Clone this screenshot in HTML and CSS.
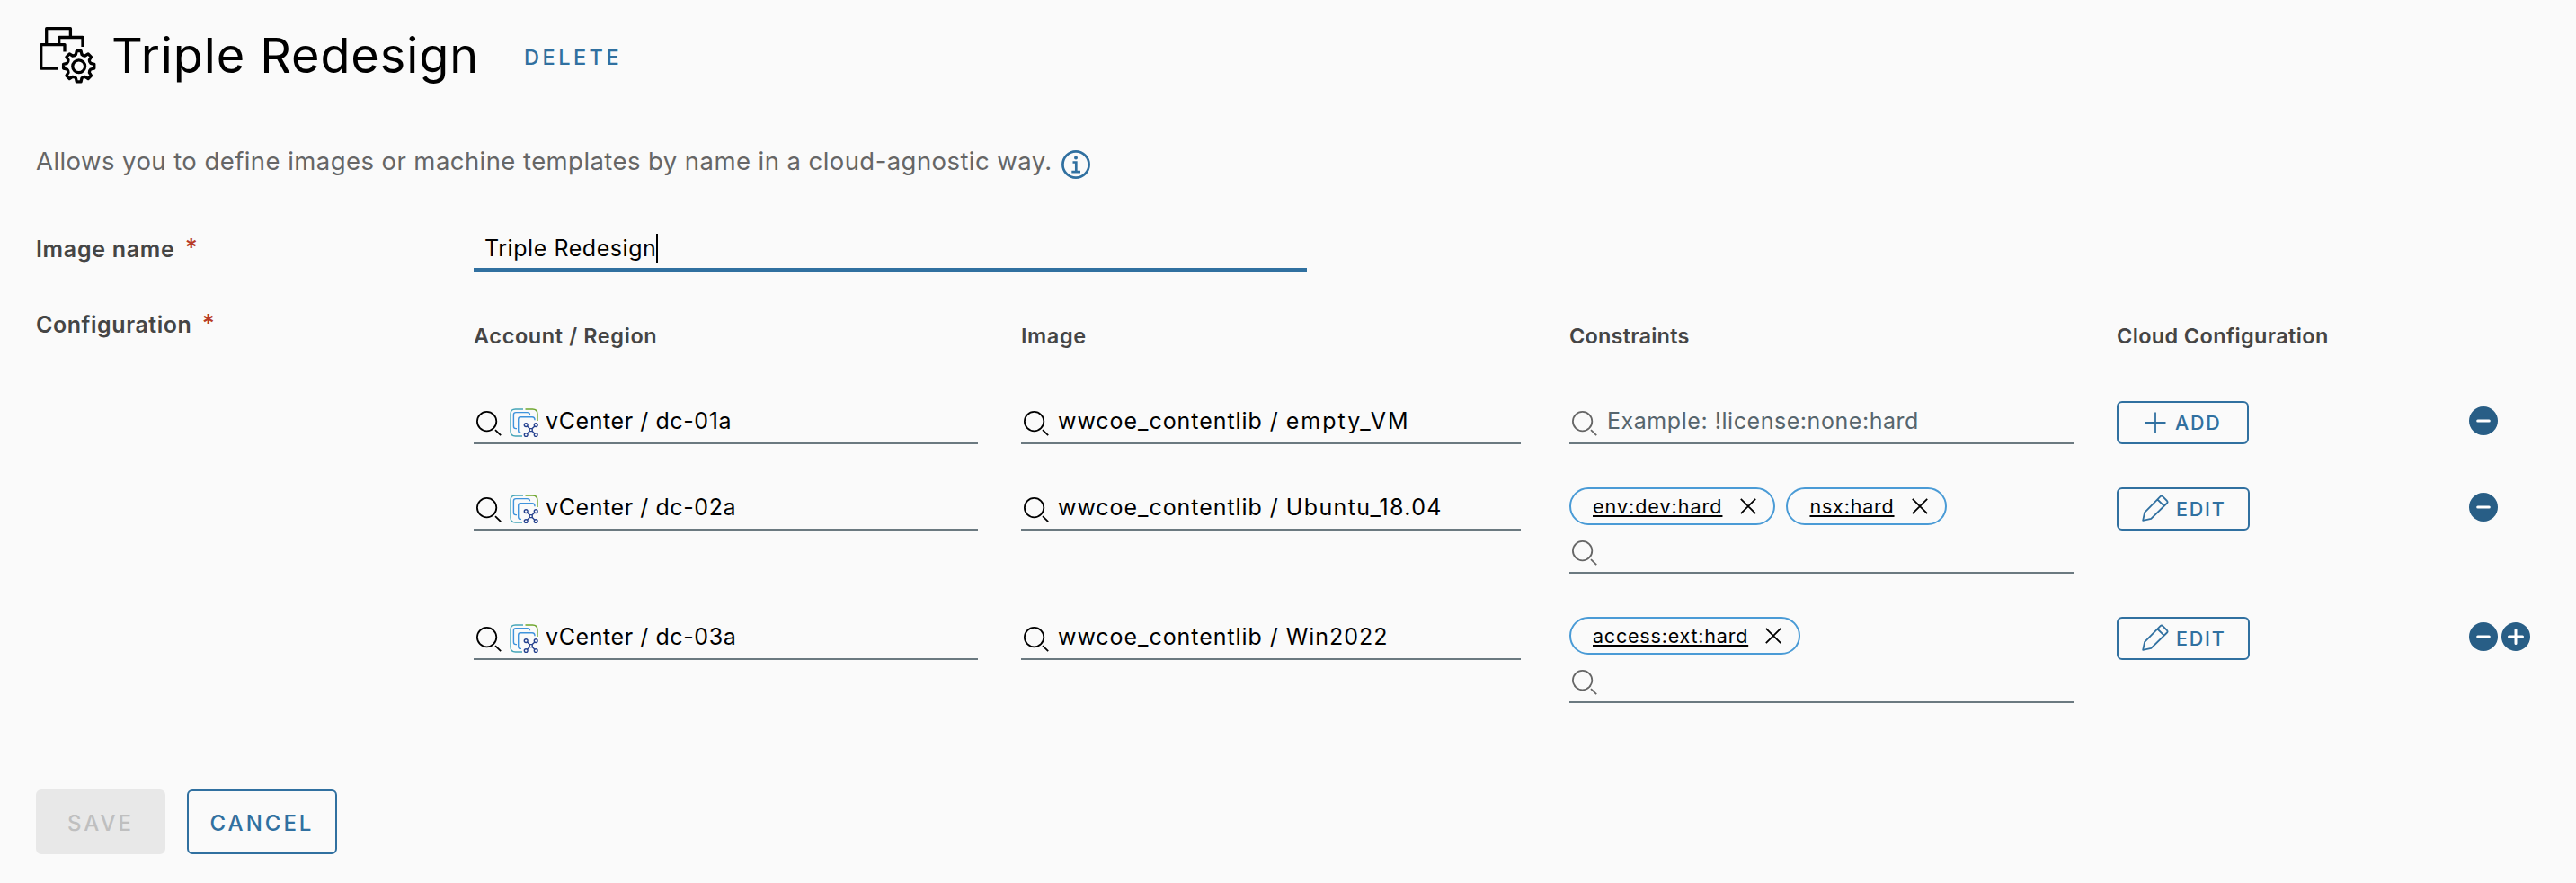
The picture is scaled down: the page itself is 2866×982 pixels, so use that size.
FILE: index.html
```html
<!DOCTYPE html>
<html lang="en">
<head>
<meta charset="utf-8">
<title>Triple Redesign</title>
<link rel="stylesheet" href="styles.css">
</head>
<body>
<svg class="defs" aria-hidden="true">
  <symbol id="search" viewBox="0 0 28 28">
    <circle cx="11.6" cy="11.6" r="10.7"/><path d="M21 21.2 27.2 27.2"/>
  </symbol>
  <symbol id="vcenter" viewBox="0 0 32 32">
    <path stroke="#45a5b8" d="M15 1H6.5Q1 1 1 6.5v19Q1 31 6.5 31H14"/>
    <path stroke="#6fa62e" d="M17.5 1h8Q31 1 31 6.5V14"/>
    <path stroke="#3f93dc" d="M8 22.6H7Q4.4 22.6 4.4 20V7Q4.4 4.6 7 4.6h12.5q3 0 3 2.7"/>
    <path stroke="#3f93dc" d="M13 27.4h-1Q9.7 27.4 9.7 25V12.3q0-2.5 2.5-2.5H25q3 0 3 3.4"/>
    <g stroke="#26428f"><circle cx="18.2" cy="18.6" r="1.9"/><circle cx="29.2" cy="18.6" r="1.9"/><circle cx="18.2" cy="29.6" r="1.9"/><circle cx="29.2" cy="29.6" r="1.9"/><path d="M22.2 22.6h3v3h-3zM19.5 20l2.700 2.600M27.900 20l-2.700 2.600M19.500 28.300l2.700-2.700M27.900 28.300l-2.700-2.700"/></g>
  </symbol>
  <symbol id="close" viewBox="0 0 18 18"><path d="M.8.8 17.200 17.200M17.200.8.8 17.200"/></symbol>
  <symbol id="plus" viewBox="0 0 24 24"><path d="M12 .5v23M.5 12h23"/></symbol>
  <symbol id="pencil" viewBox="0 0 30 30">
    <path d="M1.200 28.800 3.100 19.900 20.600 2.200Q21.900.9 23.200 2.200L28 7Q29.200 8.300 28 9.500L10.300 26.900ZM17.400 5.500 24.700 12.700"/>
  </symbol>
  <symbol id="minus-circle" viewBox="0 0 32 32"><circle cx="16" cy="16" r="16"/><path d="M9.700 16h12.600"/></symbol>
  <symbol id="plus-circle" viewBox="0 0 32 32"><circle cx="16" cy="16" r="16"/><path d="M8.500 16h15M16 8.500v15"/></symbol>
</svg>

<main class="page">
  <header class="header">
    <svg class="title-icon" viewBox="12 8 68 68">
      <path d="M21.700 28V11.700H48.400V20M35.700 28V21.500H62V32M42 37.500V29.600H15.700V56H34.500"/>
      <g transform="translate(57.700 53.700)">
        <circle r="6.900"/>
        <path d="M13.200-3.300 17.100-2.400V2.400L13.200 3.300Q11.600 4.800 11.700 7L13.800 10.400 10.400 13.800 7 11.700Q4.800 11.600 3.300 13.200L2.400 17.100H-2.400L-3.300 13.200Q-4.800 11.600-7 11.700L-10.400 13.800-13.800 10.400-11.700 7Q-11.600 4.800-13.200 3.300L-17.100 2.400V-2.400L-13.200-3.300Q-11.600-4.800-11.700-7L-13.800-10.400-10.400-13.800-7-11.700Q-4.800-11.600-3.300-13.200L-2.400-17.100H2.400L3.300-13.200Q4.800-11.600 7-11.700L10.400-13.800 13.800-10.400 11.700-7Q11.600-4.800 13.200-3.300Z"/>
      </g>
    </svg>
    <h1 class="title">Triple Redesign</h1>
    <a class="delete">DELETE</a>
  </header>

  <p class="description"><span class="description-text">Allows you to define images or machine templates by name in a cloud-agnostic way.</span>
    <svg class="info" viewBox="0 0 32 32"><circle cx="16" cy="16" r="14.600"/><circle class="dot" cx="16" cy="8.600" r="2"/><path d="M12.500 13.500H16.300V23.800M11.300 24.100H21"/></svg>
  </p>

  <section class="form-row name-row">
    <label class="label"><span class="label-name">Image name</span><span class="required">*</span></label>
    <div class="name-field"><span class="name-value">Triple Redesign</span><span class="caret"></span></div>
  </section>

  <section class="form-row">
    <label class="label"><span class="label-config">Configuration</span><span class="required">*</span></label>
    <div class="table">
      <div class="row head">
        <div class="h-account">Account / Region</div><div class="h-image">Image</div><div class="h-constraints">Constraints</div><div class="h-cloud">Cloud Configuration</div>
      </div>

      <div class="row">
        <div class="field"><svg class="search"><use href="#search"/></svg><svg class="vcenter"><use href="#vcenter"/></svg><span class="account">vCenter / dc-01a</span></div>
        <div class="field image"><svg class="search"><use href="#search"/></svg><span class="image-name">wwcoe_contentlib / <span class="empty">empty_VM</span></span></div>
        <div class="field muted"><svg class="search"><use href="#search"/></svg><span class="placeholder">Example: !license:none:hard</span></div>
        <div><button class="small-btn add"><svg class="plus"><use href="#plus"/></svg>ADD</button></div>
        <div class="actions"><svg class="round"><use href="#minus-circle"/></svg></div>
      </div>

      <div class="row tall">
        <div class="field"><svg class="search"><use href="#search"/></svg><svg class="vcenter"><use href="#vcenter"/></svg><span class="account">vCenter / dc-02a</span></div>
        <div class="field image"><svg class="search"><use href="#search"/></svg><span class="image-name">wwcoe_contentlib / <span class="ubuntu">Ubuntu_18.04</span></span></div>
        <div>
          <div class="tags">
            <span class="tag"><span class="tag-text env">env:dev:hard</span><svg class="close"><use href="#close"/></svg></span>
            <span class="tag"><span class="tag-text">nsx:hard</span><svg class="close"><use href="#close"/></svg></span>
          </div>
          <div class="field muted"><svg class="search"><use href="#search"/></svg></div>
        </div>
        <div><button class="small-btn"><svg class="pencil"><use href="#pencil"/></svg>EDIT</button></div>
        <div class="actions"><svg class="round"><use href="#minus-circle"/></svg></div>
      </div>

      <div class="row tall">
        <div class="field"><svg class="search"><use href="#search"/></svg><svg class="vcenter"><use href="#vcenter"/></svg><span class="account">vCenter / dc-03a</span></div>
        <div class="field image"><svg class="search"><use href="#search"/></svg><span class="image-name">wwcoe_contentlib / Win2022</span></div>
        <div>
          <div class="tags">
            <span class="tag"><span class="tag-text">access:ext:hard</span><svg class="close"><use href="#close"/></svg></span>
          </div>
          <div class="field muted"><svg class="search"><use href="#search"/></svg></div>
        </div>
        <div><button class="small-btn"><svg class="pencil"><use href="#pencil"/></svg>EDIT</button></div>
        <div class="actions"><svg class="round"><use href="#minus-circle"/></svg><svg class="round"><use href="#plus-circle"/></svg></div>
      </div>
    </div>
  </section>

  <footer class="footer">
    <button class="btn save" disabled>SAVE</button>
    <button class="btn cancel">CANCEL</button>
  </footer>
</main>
</body>
</html>
```
FILE: styles.css
```css
* { box-sizing: border-box; }
body {
  margin: 0;
  background: #fafafa;
  color: #000;
  font-family: Inter, "Liberation Sans", sans-serif;
  font-size: 25px;
}
svg { fill: none; flex: none; display: block; }
.defs { position: absolute; width: 0; height: 0; }
.page { width: 2866px; height: 982px; padding: 0 40px; overflow: hidden; }

.header { display: flex; align-items: center; height: 123px; white-space: nowrap; }
.title-icon { width: 68px; height: 68px; margin: 0 14px 0 2px; stroke: #000; stroke-width: 3.3; stroke-linejoin: round; }
.title { margin: 0; width: 459px; font-size: 54px; font-weight: 400; line-height: 123px; letter-spacing: .9px; }
.delete { padding-top: 4px; color: #3070a0; font-size: 23.5px; font-weight: 500; letter-spacing: 3.5px; }

.description { display: flex; gap: 11px; height: 40px; margin: 36px 0 0; color: #666; font-size: 27.5px; line-height: 41px; white-space: nowrap; }
.description-text { letter-spacing: .43px; width: 1130px; }
.info { width: 32px; height: 32px; margin-top: 8px; stroke: #3070a0; stroke-width: 2.7; }
.info .dot { fill: #3070a0; stroke: none; }

.form-row { display: grid; grid-template-columns: 487px 1fr; }
.name-row { margin: 51px 0 42px; }
.label { display: flex; gap: 11px; color: #454545; font-weight: 600; line-height: 34px; white-space: nowrap; }
.label-name { letter-spacing: .7px; }
.label-config { letter-spacing: .55px; }
.name-row .label { padding-top: 10px; }
.required { color: #b83a26; font-size: 27px; line-height: 32px; }
.name-field { display: flex; align-items: center; width: 927px; height: 52px; padding: 4px 0 0 12px; border-bottom: 4px solid #3070a0; white-space: nowrap; }
.name-value { letter-spacing: .55px; }
.caret { width: 2px; height: 33px; background: #000; }

.row { display: grid; grid-template-columns: 609px 610px 609px 392px 1fr; height: 48px; margin-bottom: 48px; white-space: nowrap; }
.row.tall { height: 96px; }
.row.head { height: 59px; margin-bottom: 43px; line-height: 59px; color: #454545; font-size: 23.5px; font-weight: 600; }
.h-account, .h-image { letter-spacing: .6px; }
.h-constraints { letter-spacing: .2px; }
.h-cloud { letter-spacing: .35px; }
.field { display: flex; align-items: center; width: 561px; height: 48px; padding-left: 3px; border-bottom: 2px solid #6b7980; }
.field.image { width: 556px; }
.field span { padding-bottom: 2px; }
.search { width: 28px; height: 28px; margin-top: 4px; stroke: #000; stroke-width: 1.8; }
.muted .search { stroke: #666; }
.vcenter { width: 32px; height: 32px; margin: 2px 8px 0 9px; stroke-width: 1.4; }
.account { letter-spacing: .58px; }
.image-name { margin-left: 10px; letter-spacing: .95px; }
.empty { letter-spacing: 2px; }
.ubuntu { letter-spacing: 1.35px; }
.placeholder { margin-left: 11px; letter-spacing: .55px; color: #56656d; }

.tags { display: flex; gap: 12px; height: 48px; }
.tag { display: flex; align-items: center; height: 42px; padding: 0 19px 0 24px; border: 2px solid #4a9bd6; border-radius: 21px; font-size: 21.5px; }
.tag-text { letter-spacing: .8px; text-decoration: underline; text-decoration-thickness: 2px; text-underline-offset: 2px; }
.tag-text.env { letter-spacing: 1px; }
.close { width: 18px; height: 18px; margin-left: 19px; stroke: #000; stroke-width: 1.8; }
.env + .close { margin-left: 20px; }

button { font-family: inherit; }
.small-btn { display: flex; align-items: center; width: 148px; height: 48px; padding: 0 0 0 26px; border: 2px solid #3070a0; border-radius: 6px; background: none; color: #3070a0; font-size: 21.5px; font-weight: 500; letter-spacing: 1.8px; }
.small-btn.add { width: 147px; padding-left: 29px; }
.plus { width: 24px; height: 24px; margin-right: 10px; stroke: #3070a0; stroke-width: 1.8; }
.pencil { width: 30px; height: 30px; margin: -3px 8px 0 0; stroke: #3070a0; stroke-width: 1.8; stroke-linejoin: round; }
.actions { display: flex; gap: 4px; padding-top: 6px; }
.round { width: 32px; height: 32px; fill: #285e86; stroke-width: 0; stroke: #fff; stroke-linecap: round; }
#minus-circle path, #plus-circle path { stroke-width: 3; }

.footer { display: flex; gap: 24px; margin-top: 48px; }
.btn { height: 72px; padding: 3px 0 0; border: 2px solid #3070a0; border-radius: 6px; background: none; color: #3070a0; font-size: 24px; font-weight: 500; letter-spacing: 3px; }
.save { width: 144px; border-color: #e8e8e8; background: #e8e8e8; color: #bfbfbf; }
.cancel { width: 167px; }
```
